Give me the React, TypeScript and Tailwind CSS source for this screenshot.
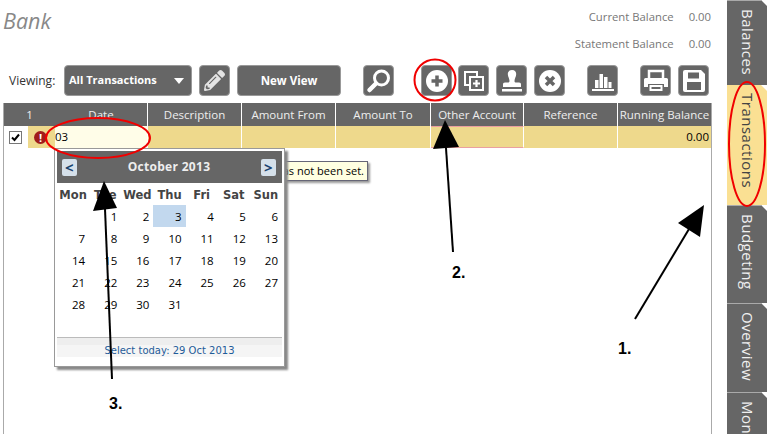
import React from 'react';
import { FaPencilAlt } from 'react-icons/fa';

const columns = [
  { label: 'Description', width: 'w-[94px]' },
  { label: 'Amount From', width: 'w-[94px]' },
  { label: 'Amount To', width: 'w-[95px]' },
  { label: 'Other Account', width: 'w-[93px]' },
  { label: 'Reference', width: 'w-[94px]' },
  { label: 'Running Balance', width: 'w-[93px]' },
];

const weeks = [
  ['', '1', '2', '3', '4', '5', '6'],
  ['7', '8', '9', '10', '11', '12', '13'],
  ['14', '15', '16', '17', '18', '19', '20'],
  ['21', '22', '23', '24', '25', '26', '27'],
  ['28', '29', '30', '31', '', '', ''],
];

const tabs = [
  { label: 'Balances', height: 'h-[85px]', active: false },
  { label: 'Transactions', height: 'h-[120px]', active: true },
  { label: 'Budgeting', height: 'h-[98px]', active: false },
  { label: 'Overview', height: 'h-[89px]', active: false },
  { label: 'Monthly', height: 'h-[89px]', active: false },
];

function IconButton({ className = '', children }: { className?: string; children: React.ReactNode }) {
  return (
    <div className={`flex h-[31px] w-[31px] shrink-0 items-center justify-center rounded-[4px] border border-[#999] bg-[#666] ${className}`}>
      {children}
    </div>
  );
}

function Toolbar() {
  return (
    <div className="flex h-[31px] items-center">
      <span className="ml-[9px] w-[55px] text-[12px] text-[#333]">Viewing:</span>
      <div className="flex h-[31px] w-[128px] items-center justify-between rounded-[4px] border border-[#999] bg-[#666] pl-[4px] pr-[7px] text-[11px] font-bold text-white">
        All Transactions
        <span className="h-0 w-0 border-x-[5.5px] border-t-[6px] border-x-transparent border-t-white" />
      </div>
      <IconButton className="ml-[7px]">
        <FaPencilAlt className="text-[21px] text-[#e4e4e4]" />
      </IconButton>
      <div className="ml-[7px] flex h-[31px] w-[104px] items-center justify-center rounded-[4px] border border-[#999] bg-[#666] text-[11.5px] font-bold text-white">
        New View
      </div>
      <IconButton className="ml-[22px]">
        <svg width="26" height="26" viewBox="0 0 26 26" fill="none" stroke="white">
          <circle cx="15.5" cy="10" r="7" strokeWidth="3" />
          <path d="M10 15.5L3.5 22" strokeWidth="4.5" strokeLinecap="round" />
        </svg>
      </IconButton>
      <IconButton className="ml-[27px]">
        <svg width="24" height="24" viewBox="0 0 24 24">
          <circle cx="12" cy="12" r="11" fill="white" />
          <path d="M12 6.5v11M6.5 12h11" stroke="#666" strokeWidth="3.5" />
        </svg>
      </IconButton>
      <IconButton className="ml-[6px]">
        <svg width="22" height="22" viewBox="0 0 22 22" fill="none" stroke="white" strokeWidth="2">
          <path d="M14 6V2H2v13h5" />
          <rect x="7" y="7" width="13" height="13" fill="#666" />
          <path d="M13.5 10v7M10 13.5h7" strokeWidth="2.2" />
        </svg>
      </IconButton>
      <IconButton className="ml-[7px]">
        <svg width="22" height="24" viewBox="0 0 22 24" fill="white">
          <path d="M11 1c3 0 4.2 2 4.2 4 0 2.8-1.7 4.5-1.7 7 0 1 .5 1.5 2 1.5h2.5c1.5 0 2 .8 2 2V18H2v-2.5c0-1.2.5-2 2-2h2.5c1.5 0 2-.5 2-1.5 0-2.5-1.7-4.2-1.7-7 0-2 1.2-4 4.2-4z" />
          <rect x="1" y="20" width="20" height="2.5" />
        </svg>
      </IconButton>
      <IconButton className="ml-[7px]">
        <svg width="24" height="24" viewBox="0 0 24 24">
          <circle cx="12" cy="12" r="11" fill="white" />
          <path d="M8 8l8 8M16 8l-8 8" stroke="#666" strokeWidth="3.5" />
        </svg>
      </IconButton>
      <IconButton className="ml-[22px]">
        <svg width="24" height="24" viewBox="0 0 24 24" fill="white">
          <rect x="4" y="11" width="3.5" height="8" />
          <rect x="8.5" y="5" width="3.5" height="14" />
          <rect x="13" y="8" width="3.5" height="11" />
          <rect x="17.5" y="13" width="3" height="6" />
          <rect x="1" y="20" width="22" height="2" />
        </svg>
      </IconButton>
      <IconButton className="ml-[22px]">
        <svg width="26" height="24" viewBox="0 0 26 24">
          <path d="M6 9V2h14v7" fill="none" stroke="white" strokeWidth="2.5" />
          <path d="M1 10.5q0-1.5 1.5-1.5h21q1.5 0 1.5 1.5V18h-4v-3H5v3H1z" fill="white" />
          <path d="M6.5 16h13v6h-13z" fill="white" />
          <path d="M8.5 18h9v2h-9z" fill="#666" />
        </svg>
      </IconButton>
      <IconButton className="ml-[7px]">
        <svg width="24" height="24" viewBox="0 0 24 24">
          <path d="M1 3q0-2 2-2h16l4 4v16q0 2-2 2H3q-2 0-2-2z" fill="white" />
          <rect x="6" y="3.5" width="11" height="6" fill="#666" />
          <rect x="5" y="13" width="14" height="8" fill="#666" />
        </svg>
      </IconButton>
    </div>
  );
}

function Grid() {
  return (
    <div className="ml-[3px] flex h-[331px] w-[709px] flex-col border-x border-[#aaa]">
      <div className="flex h-[23px] bg-[#666] text-[11.5px] text-[#eee]">
        <div className="flex w-[144px] shrink-0">
          <span className="w-[51px] text-center leading-[24px]">1</span>
          <span className="flex-1 border-r border-white text-center leading-[24px]">Date</span>
        </div>
        {columns.map((col) => (
          <span key={col.label} className={`${col.width} shrink-0 overflow-hidden whitespace-nowrap border-r border-white text-center leading-[24px] last:border-r-0`}>
            {col.label}
          </span>
        ))}
      </div>
      <div className="flex h-[22px] text-[11.5px] text-black">
        <div className="flex w-[24px] shrink-0 items-center justify-center bg-white pr-[2px]">
          <div className="flex h-[13px] w-[13px] items-center justify-center border border-[#777] bg-white">
            <svg width="9" height="9" viewBox="0 0 9 9" fill="none" stroke="black" strokeWidth="2">
              <path d="M1 4.5l2.5 2.5L8 1.5" />
            </svg>
          </div>
        </div>
        <div className="flex w-[27px] shrink-0 items-center justify-center bg-[#eed98c] pr-[2px]">
          <span className="flex h-[13px] w-[13px] items-center justify-center rounded-full bg-[#a01c1c] text-[11px] font-bold leading-none text-white">!</span>
        </div>
        <div className="w-[93px] shrink-0 border-r border-white bg-[#fffde8] leading-[22px]">03</div>
        {columns.map((col) => (
          <div
            key={col.label}
            className={`${col.width} shrink-0 border-r border-white bg-[#eed98c] pr-[2px] text-right leading-[22px] last:border-r-0 ${col.label === 'Other Account' ? 'border-y border-y-[#eaa0a0]' : ''}`}
          >
            {col.label === 'Running Balance' ? '0.00' : ''}
          </div>
        ))}
      </div>
    </div>
  );
}

function Calendar() {
  return (
    <div className="absolute left-[54px] top-[148px] h-[219px] w-[231px] border border-[#999] bg-white p-[2px] shadow-[3px_3px_2px_#888]">
      <div className="flex h-[32px] items-center justify-between bg-[#666] pl-[5px] pr-[6px] text-[12px] font-bold tracking-[0.3px] text-[#eee]">
        <span className="flex h-[17px] w-[15px] items-center justify-center rounded-[2px] bg-[#d5e0ea] text-[15px] font-bold leading-none text-[#17406e]">&lt;</span>
        October 2013
        <span className="flex h-[17px] w-[15px] items-center justify-center rounded-[2px] bg-[#d5e0ea] text-[15px] font-bold leading-none text-[#17406e]">&gt;</span>
      </div>
      <div className="grid grid-cols-7">
        {['Mon', 'Tue', 'Wed', 'Thu', 'Fri', 'Sat', 'Sun'].map((day) => (
          <span key={day} className="h-[22px] text-center text-[11.5px] font-bold leading-[24px] text-[#444]" style={{ fontFamily: '"DejaVu Sans", sans-serif' }}>{day}</span>
        ))}
        {weeks.flat().map((day, i) => (
          <span key={i} className={`h-[22px] pr-[4px] text-right text-[11.5px] leading-[23px] text-black ${day === '3' ? 'bg-[#c2d8ee]' : ''}`}>
            {day}
          </span>
        ))}
      </div>
      <div className="mt-[22px] border-t border-[#bbb] bg-[#eee] pt-[7px]">
        <div className="h-[12px] bg-[#f5f5f5] text-center text-[10px] leading-[12px] text-[#1f5c99]" style={{ fontFamily: '"DejaVu Sans", sans-serif' }}>Select today: 29 Oct 2013</div>
      </div>
    </div>
  );
}

function SideTabs() {
  return (
    <div className="ml-[15px] flex h-[434px] w-[40px] shrink-0 flex-col overflow-hidden">
      {tabs.map((tab) => (
        <div
          key={tab.label}
          className={`${tab.height} w-[40px] shrink-0 pt-[8px] text-[15px] leading-[38px] tracking-[0.5px] [clip-path:polygon(0_0,34px_0,100%_6px,100%_100%,0_100%)] [writing-mode:vertical-rl] ${
            tab.active ? 'bg-[#fae093] text-[#444]' : 'border-t border-[#aaa] bg-[#666] text-[#f0f0f0]'
          }`}
        >
          {tab.label}
        </div>
      ))}
    </div>
  );
}

function Annotations() {
  return (
    <svg className="pointer-events-none absolute left-0 top-0" width="770" height="434" viewBox="0 0 770 434" fill="none">
      <ellipse cx="98" cy="138" rx="52" ry="20" stroke="#f00000" strokeWidth="2" />
      <circle cx="435" cy="80" r="20.5" stroke="#f00000" strokeWidth="2" />
      <ellipse cx="747" cy="144" rx="18" ry="62" stroke="#f00000" strokeWidth="2" />
      <path d="M635 319L689 229" stroke="black" strokeWidth="2" />
      <path d="M704 205L678 223L700 237Z" fill="black" />
      <path d="M453 252L446 148" stroke="black" strokeWidth="2" />
      <path d="M445 120L433 149L459 147Z" fill="black" />
      <path d="M112 379L105 209" stroke="black" strokeWidth="2" />
      <path d="M104 181L93 211L117 208Z" fill="black" />
    </svg>
  );
}

export default function App() {
  return (
    <div className="relative flex h-[434px] w-[770px] overflow-hidden bg-white" style={{ fontFamily: '"Open Sans", sans-serif' }}>
      <div className="w-[712px] shrink-0">
        <div className="flex h-[65px] justify-between">
          <h1 className="ml-[3px] mt-[6px] text-[21.5px] italic leading-[30px] text-[#888]">Bank</h1>
          <div className="mr-[1px] pt-[3px] text-[11.3px] leading-[27px] text-[#777]">
            <div className="flex justify-end">Current Balance<span className="ml-[15px]">0.00</span></div>
            <div className="flex justify-end">Statement Balance<span className="ml-[15px]">0.00</span></div>
          </div>
        </div>
        <Toolbar />
        <div className="h-[7px]" />
        <Grid />
      </div>
      <SideTabs />
      <div className="absolute left-[270px] top-[161px] h-[20px] w-[98px] overflow-hidden whitespace-nowrap border border-[#667] bg-[#ffffe1] pr-[3px] text-right text-[11px] leading-[18px] text-black shadow-[2px_2px_2px_#999]">
        as not been set.
      </div>
      <Calendar />
      <Annotations />
      <span className="absolute left-[618px] top-[337px] text-[16px] font-bold text-black" style={{ fontFamily: '"Liberation Sans", sans-serif' }}>1.</span>
      <span className="absolute left-[452px] top-[261px] text-[16px] font-bold text-black" style={{ fontFamily: '"Liberation Sans", sans-serif' }}>2.</span>
      <span className="absolute left-[109px] top-[392px] text-[16px] font-bold text-black" style={{ fontFamily: '"Liberation Sans", sans-serif' }}>3.</span>
    </div>
  );
}
